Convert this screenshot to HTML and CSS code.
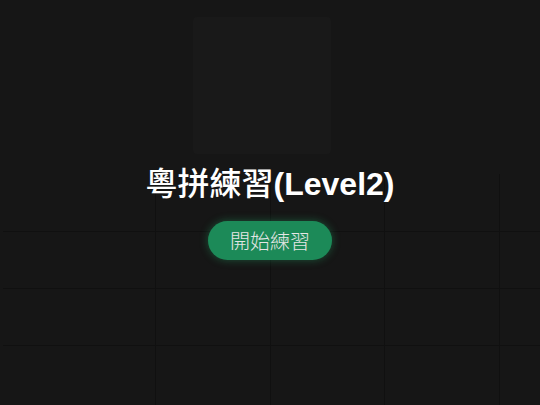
FILE: index.html
```html
<!DOCTYPE html>
<html lang="zh-Hant">
<head>
<meta charset="utf-8">
<title>粵拼練習</title>
<link rel="stylesheet" href="styles.css">
</head>
<body>
<div class="grid-bg"></div>
<main class="page">
  <div class="placeholder"></div>
  <h1 class="title"><span class="cjk">粵拼練習</span>(Level2)</h1>
  <button class="start">開始練習</button>
</main>
</body>
</html>
```
FILE: styles.css
```css
html, body {
  margin: 0;
  padding: 0;
  width: 540px;
  height: 405px;
  overflow: hidden;
  background: #161616;
}

.grid-bg {
  position: absolute;
  left: 3px;
  top: 174px;
  right: 0;
  bottom: 0;
  background-image:
    linear-gradient(#101010, #101010),
    linear-gradient(#101010, #101010),
    linear-gradient(#101010, #101010),
    linear-gradient(#101010, #101010),
    linear-gradient(#101010, #101010),
    linear-gradient(#101010, #101010),
    linear-gradient(#101010, #101010);
  background-repeat: no-repeat;
  background-size:
    1px 100%, 1px 100%, 1px 100%, 1px 100%,
    100% 1px, 100% 1px, 100% 1px;
  background-position:
    152px 0, 267px 0, 381px 0, 496px 0,
    0 57px, 0 114px, 0 171px;
}

.page {
  position: relative;
  display: flex;
  flex-direction: column;
  align-items: center;
  padding-top: 17px;
}

.placeholder {
  width: 138px;
  height: 137px;
  margin-right: 16px;
  background: #191919;
  border-radius: 4px;
}

.title {
  margin: 8px 0 0 0;
  font-family: "Liberation Sans", Arial, "Noto Sans CJK TC", sans-serif;
  font-size: 32px;
  font-weight: 700;
  line-height: 38px;
  color: #ffffff;
  white-space: nowrap;
}

.title .cjk {
  font-family: "Noto Sans CJK TC", sans-serif;
  font-weight: 500;
}

.start {
  margin-top: 18px;
  height: 39px;
  padding: 0 22px;
  border: none;
  border-radius: 20px;
  background: #1c8a58;
  color: #e6e6e6;
  font-family: "Noto Sans CJK TC", sans-serif;
  font-size: 20px;
  font-weight: 300;
  line-height: 37px;
  box-shadow: 0 0 8px rgba(40, 200, 120, 0.35);
}
```
